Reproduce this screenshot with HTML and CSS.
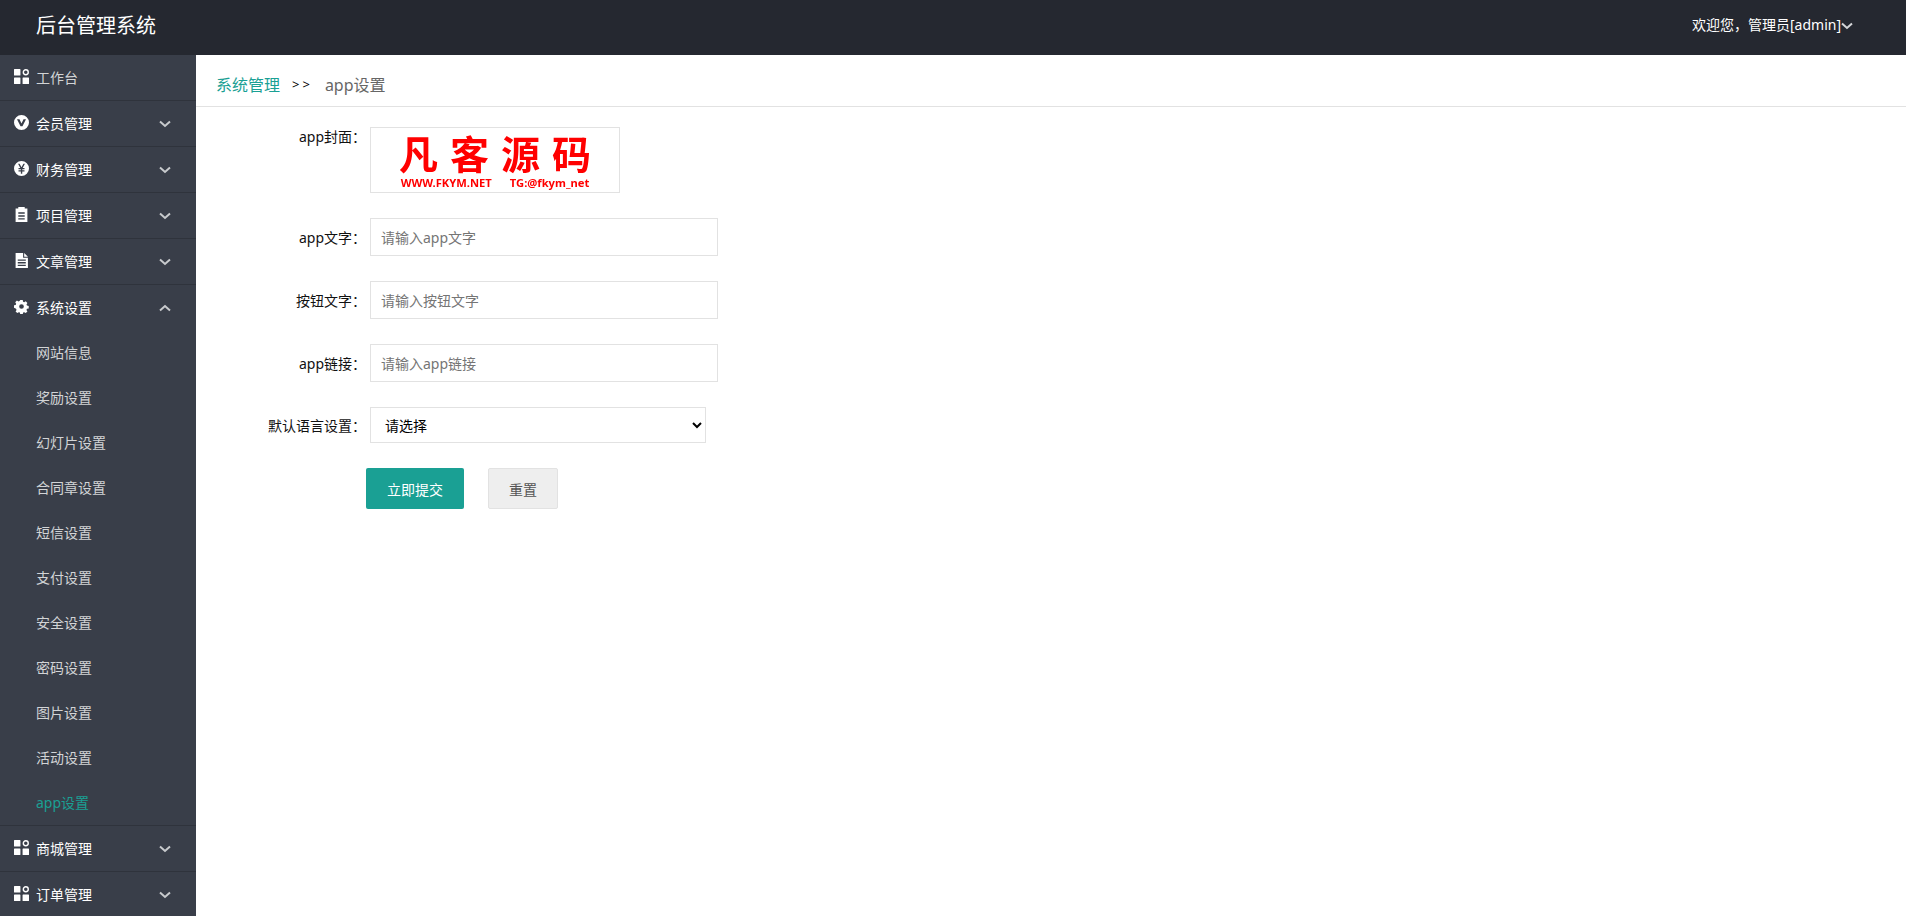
FILE: index.html
```html
<!DOCTYPE html>
<html lang="zh-CN">
<head>
  <meta charset="UTF-8">
  <title>后台管理系统</title>
  <link rel="stylesheet" href="styles.css">
</head>
<body>

<svg class="defs" width="0" height="0">
  <symbol id="i-grid" viewBox="1 1 14 14">
    <path fill="currentColor" d="M1 1.500a.5.5 0 0 1 .5-.5h5a.5.5 0 0 1 .5.5v5a.5.5 0 0 1-.5.5h-5a.5.5 0 0 1-.5-.5zM1 9.500a.5.5 0 0 1 .5-.5h5a.5.5 0 0 1 .5.5v5a.5.5 0 0 1-.5.5h-5a.5.5 0 0 1-.5-.5zM9 9.500a.5.5 0 0 1 .5-.5h5a.5.5 0 0 1 .5.5v5a.5.5 0 0 1-.5.5h-5a.5.5 0 0 1-.5-.5z"/>
    <circle cx="12" cy="4" r="2.300" fill="none" stroke="currentColor" stroke-width="1.300"/>
  </symbol>
  <symbol id="i-vip" viewBox="1 1 14 14">
    <path fill="currentColor" fill-rule="evenodd" d="M8 1a7 7 0 1 1 0 14A7 7 0 0 1 8 1zM3.800 5l3.300 6.500h1.800L12.200 5h-2.300L8 9 6.100 5z"/>
  </symbol>
  <symbol id="i-yen" viewBox="1 1 14 14">
    <path fill="currentColor" fill-rule="evenodd" d="M8 1a7 7 0 1 1 0 14A7 7 0 0 1 8 1zM4.800 3.600l2.100 3.900H5.200v1.200h2.200v.9H5.200v1.200h2.200v2h1.300v-2h2.100V9.600H8.700v-.9h2.100V7.500H9.100l2.100-3.900H9.800L8 6.900 6.200 3.600z"/>
  </symbol>
  <symbol id="i-clip" viewBox="1 1 14 14">
    <path fill="currentColor" fill-rule="evenodd" d="M5 1h6v1.500h2.500V15h-11V2.500H5zM5 6v1.200h6V6zM5 8.800V10h6V8.800zM5 11.500v1.200h6v-1.200z"/>
  </symbol>
  <symbol id="i-doc" viewBox="1 1 14 14">
    <path fill="currentColor" fill-rule="evenodd" d="M2.500 1h7v4.500H14V15H2.500zM10.500 1l3.500 3.500h-3.500zM4.500 7v1.200h7.500V7zM4.500 9.500v1.200h7.500V9.500zM4.500 12v1.200h7.500V12z"/>
  </symbol>
  <symbol id="i-gear" viewBox="0 0 16 16">
    <path fill="currentColor" fill-rule="evenodd" d="M6.700 1h2.600l.4 1.900 1.200.5 1.600-1 1.800 1.800-1 1.600.5 1.200 1.900.4v2.600l-1.900.4-.5 1.200 1 1.600-1.800 1.800-1.600-1-1.200.5-.4 1.900H6.700l-.4-1.900-1.200-.5-1.600 1-1.800-1.800 1-1.600-.5-1.200L0 9.300V6.700l1.800-.4.500-1.200-1-1.600 1.800-1.800 1.600 1 1.200-.5zM8 5.500a2.500 2.500 0 1 0 0 5 2.500 2.500 0 0 0 0-5z"/>
  </symbol>
  <symbol id="i-down" viewBox="0 0 12 8">
    <path fill="none" stroke="currentColor" stroke-width="2" d="M1 1.500l5 4.500 5-4.500"/>
  </symbol>
  <symbol id="i-up" viewBox="0 0 12 8">
    <path fill="none" stroke="currentColor" stroke-width="2" d="M1 6.500l5-4.500 5 4.500"/>
  </symbol>
</svg>

<header class="topbar">
  <div class="brand">后台管理系统</div>
  <div class="user">欢迎您，管理员[admin]<svg class="user-arrow"><use href="#i-down"/></svg></div>
</header>

<div class="main">
  <aside class="side">
    <div class="nav-item nav-home"><svg class="nav-icon"><use href="#i-grid"/></svg>工作台</div>
    <div class="nav-item"><svg class="nav-icon"><use href="#i-vip"/></svg>会员管理<svg class="nav-arrow"><use href="#i-down"/></svg></div>
    <div class="nav-item"><svg class="nav-icon"><use href="#i-yen"/></svg>财务管理<svg class="nav-arrow"><use href="#i-down"/></svg></div>
    <div class="nav-item"><svg class="nav-icon"><use href="#i-clip"/></svg>项目管理<svg class="nav-arrow"><use href="#i-down"/></svg></div>
    <div class="nav-item"><svg class="nav-icon"><use href="#i-doc"/></svg>文章管理<svg class="nav-arrow"><use href="#i-down"/></svg></div>
    <div class="nav-group">
      <div class="nav-item nav-open"><svg class="nav-icon"><use href="#i-gear"/></svg>系统设置<svg class="nav-arrow"><use href="#i-up"/></svg></div>
      <a class="sub-item">网站信息</a>
      <a class="sub-item">奖励设置</a>
      <a class="sub-item">幻灯片设置</a>
      <a class="sub-item">合同章设置</a>
      <a class="sub-item">短信设置</a>
      <a class="sub-item">支付设置</a>
      <a class="sub-item">安全设置</a>
      <a class="sub-item">密码设置</a>
      <a class="sub-item">图片设置</a>
      <a class="sub-item">活动设置</a>
      <a class="sub-item sub-active">app设置</a>
    </div>
    <div class="nav-item"><svg class="nav-icon"><use href="#i-grid"/></svg>商城管理<svg class="nav-arrow"><use href="#i-down"/></svg></div>
    <div class="nav-item"><svg class="nav-icon"><use href="#i-grid"/></svg>订单管理<svg class="nav-arrow"><use href="#i-down"/></svg></div>
  </aside>

  <section class="content">
    <div class="crumbs">
      <a class="crumb-link">系统管理</a>
      <span class="crumb-sep">&gt;&gt;</span>
      <span class="crumb-now">app设置</span>
    </div>

    <form class="form">
      <div class="row row-cover">
        <label class="label">app封面：</label>
        <div class="cover">
          <div class="cover-title">凡客源码</div>
          <div class="cover-sub"><span>WWW.FKYM.NET</span><span>TG:@fkym_net</span></div>
        </div>
      </div>
      <div class="row">
        <label class="label">app文字：</label>
        <input class="input" type="text" placeholder="请输入app文字">
      </div>
      <div class="row">
        <label class="label">按钮文字：</label>
        <input class="input" type="text" placeholder="请输入按钮文字">
      </div>
      <div class="row">
        <label class="label">app链接：</label>
        <input class="input" type="text" placeholder="请输入app链接">
      </div>
      <div class="row row-select">
        <label class="label">默认语言设置：</label>
        <select class="select"><option>请选择</option></select>
      </div>
      <div class="actions">
        <button class="btn btn-primary" type="button">立即提交</button>
        <button class="btn btn-reset" type="button">重置</button>
      </div>
    </form>
  </section>
</div>

</body>
</html>
```
FILE: styles.css
```css
* {
  box-sizing: border-box;
}

html, body {
  height: 100%;
}

body {
  margin: 0;
  overflow: hidden;
  display: flex;
  flex-direction: column;
  font-family: "Noto Sans", "Noto Sans CJK SC", sans-serif;
  font-size: 14px;
  background: #fff;
}

.defs {
  position: absolute;
}

/* header */
.topbar {
  flex: none;
  height: 55px;
  display: flex;
  align-items: center;
  justify-content: space-between;
  padding-left: 36px;
  background: #252830;
  color: #fff;
}

.brand {
  font-size: 20px;
  line-height: 1;
  margin-top: -3px;
}

.user {
  display: flex;
  align-items: center;
  width: 214px;
  font-size: 14px;
  line-height: 1;
  margin-top: -5px;
}

.user-arrow {
  width: 12px;
  height: 8px;
  margin-top: 2px;
  color: #d5d6d8;
}

/* sidebar */
.main {
  flex: 1;
  display: flex;
  min-height: 0;
}

.side {
  flex: none;
  width: 196px;
  background: #393e49;
  color: #fff;
}

.nav-item {
  position: relative;
  height: 46px;
  display: flex;
  align-items: center;
  padding: 0 0 2px 14px;
  border-bottom: 1px solid #2f333c;
}

.nav-home {
  color: #d2d4d6;
}

.nav-open {
  height: 45px;
  border-bottom: 0;
}

.nav-group {
  border-bottom: 1px solid #2f333c;
}

.nav-icon {
  width: 15px;
  height: 15px;
  margin-right: 7px;
  margin-top: -1px;
  color: #fff;
}

.nav-arrow {
  width: 12px;
  height: 8px;
  position: absolute;
  right: 25px;
  top: 19px;
  color: #c8cacd;
}

.sub-item {
  display: flex;
  align-items: center;
  height: 45px;
  padding: 0 0 2px 36px;
  color: #d2d4d6;
}

.sub-active {
  color: #1aa094;
}

/* content */
.content {
  flex: 1;
  min-width: 0;
}

.crumbs {
  height: 52px;
  display: flex;
  align-items: center;
  padding: 7px 0 0 20px;
  border-bottom: 1px solid #e2e2e2;
  font-size: 16px;
}

.crumb-link {
  color: #1aa094;
}

.crumb-sep {
  margin: 0 12px 0 12px;
  font-size: 13px;
  color: #000;
  letter-spacing: 3px;
}

.crumb-now {
  color: #666;
}

.form {
  padding-top: 20px;
}

.row {
  display: flex;
  align-items: center;
  height: 38px;
  margin-bottom: 25px;
}

.row-cover {
  align-items: flex-start;
  height: 66px;
  margin-bottom: 25px;
}

.row-cover .label {
  margin-top: -1px;
}

.row-select {
  height: 36px;
  margin-bottom: 25px;
}

.label {
  width: 170px;
  margin-right: 4px;
  padding-bottom: 1px;
  text-align: right;
  font-size: 14px;
  color: #111;
}

.cover {
  width: 250px;
  height: 66px;
  padding-top: 8px;
  border: 1px solid #e2e2e2;
  color: #f00;
  text-align: center;
  font-weight: 700;
}

.cover-title {
  font-family: "Liberation Sans", "Noto Sans CJK SC", sans-serif;
  font-size: 39px;
  line-height: 40px;
  letter-spacing: 12px;
  margin-right: -12px;
  white-space: nowrap;
  filter: blur(.3px);
}

.cover-sub {
  display: flex;
  justify-content: center;
  gap: 18px;
  font-size: 11.200px;
  line-height: 14px;
  filter: blur(.3px);
}

.input {
  width: 348px;
  height: 38px;
  margin: 0;
  padding: 0 10px;
  border: 1px solid #e2e2e2;
  outline: 0;
  font: inherit;
  font-size: 14px;
}

.input::placeholder {
  color: #757575;
}

.select {
  width: 336px;
  height: 36px;
  margin: 0;
  padding: 0 10px;
  border: 1px solid #e2e2e2;
  border-radius: 0;
  background: #fff;
  outline: 0;
  font: inherit;
  font-size: 14px;
  color: #000;
}

.actions {
  display: flex;
  gap: 24px;
  padding-left: 170px;
}

.btn {
  height: 41px;
  border-radius: 2px;
  font: inherit;
  font-size: 14px;
}

.btn-primary {
  width: 98px;
  border: 0;
  background: #1aa094;
  color: #fff;
}

.btn-reset {
  width: 70px;
  border: 1px solid #e2e2e2;
  background: #eee;
  color: #555;
}
```
